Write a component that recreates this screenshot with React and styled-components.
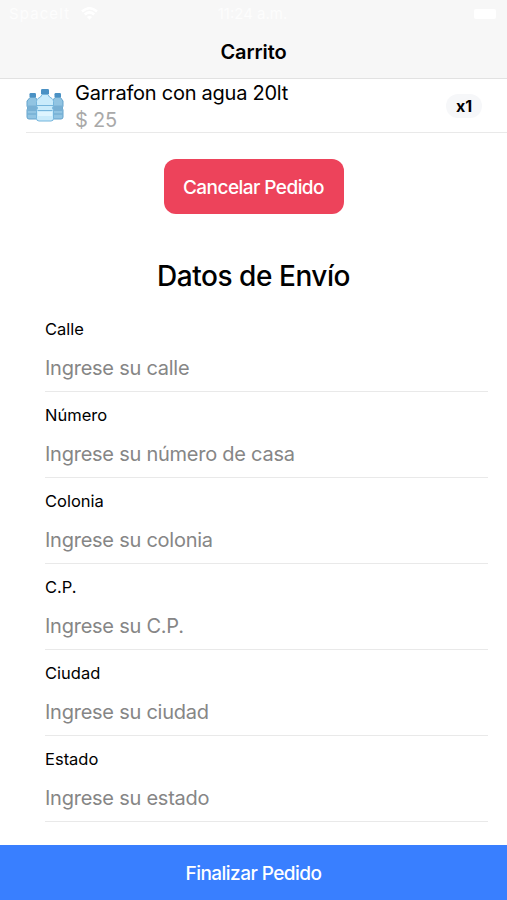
import styled, { createGlobalStyle } from "styled-components";

const GlobalStyle = createGlobalStyle`
  * {
    box-sizing: border-box;
  }
  body {
    margin: 0;
    background: #fff;
    font-family: Inter, "Liberation Sans", sans-serif;
    color: #000;
  }
`;

const Screen = styled.div`
  display: flex;
  flex-direction: column;
  height: 900px;
  overflow: hidden;
`;

const Header = styled.header`
  height: 79px;
  flex-shrink: 0;
  background: #f7f7f7;
  border-bottom: 1px solid #e2e2e2;
`;

const StatusBar = styled.div`
  display: grid;
  grid-template-columns: 1fr auto 1fr;
  align-items: center;
  height: 27px;
  padding: 0 11px 0 9px;
  font-size: 15px;
  color: #fdfdfd;
`;

const Carrier = styled.div`
  display: flex;
  align-items: center;
  gap: 11px;
  letter-spacing: 1.1px;
`;

const Battery = styled.div`
  justify-self: end;
  width: 22px;
  height: 10px;
  border-radius: 2px;
  background: #fff;
`;

const HeaderTitle = styled.h1`
  margin: 0;
  text-align: center;
  font-size: 20px;
  font-weight: 600;
  line-height: 50px;
  letter-spacing: -0.1px;
`;

const Item = styled.div`
  display: flex;
  align-items: center;
  height: 54px;
  flex-shrink: 0;
  margin-left: 26px;
  padding-right: 25px;
  border-bottom: 1px solid #e9e9e9;
`;

const ItemInfo = styled.div`
  flex: 1;
  margin-left: 11px;
  padding-top: 2px;
  font-size: 20px;
  line-height: 27px;
`;

const ItemName = styled.div`
  letter-spacing: -0.25px;
`;

const Price = styled.div`
  color: #a9a9a9;
  letter-spacing: -0.2px;
`;

const Badge = styled.span`
  width: 36px;
  height: 24px;
  border-radius: 12px;
  background: #f6f7f9;
  text-align: center;
  font-size: 16px;
  font-weight: 700;
  line-height: 25px;
`;

const CancelButton = styled.button`
  align-self: center;
  flex-shrink: 0;
  width: 180px;
  height: 55px;
  margin-top: 26px;
  padding: 2px 0 0;
  border: 0;
  border-radius: 12px;
  background: #ed435b;
  color: #fff;
  font: 450 19px Inter, sans-serif;
  letter-spacing: -0.55px;
`;

const FormTitle = styled.h2`
  margin: 43px 0 0;
  text-align: center;
  font-size: 28px;
  font-weight: 500;
  line-height: 38px;
  letter-spacing: -0.45px;
`;

const Form = styled.form`
  flex: 1;
  padding: 11px 19px 0 45px;
`;

const Field = styled.label`
  display: block;
  height: 86px;
  padding-top: 11px;
  border-bottom: 1px solid #e9e9e9;
`;

const FieldName = styled.span`
  display: block;
  font-size: 16.5px;
  line-height: 24px;
`;

const Input = styled.input`
  display: block;
  width: 100%;
  height: 38px;
  margin-top: 8px;
  padding: 0;
  border: 0;
  outline: 0;
  background: none;
  font: 400 20px Inter, sans-serif;
  letter-spacing: -0.25px;
  &::placeholder {
    color: #868686;
    opacity: 1;
  }
`;

const SubmitButton = styled.button`
  flex-shrink: 0;
  height: 55px;
  padding: 2px 0 0;
  border: 0;
  background: #397fff;
  color: #fff;
  font: 450 19px Inter, sans-serif;
  letter-spacing: -0.55px;
`;

const fields = [
  { name: "Calle", placeholder: "Ingrese su calle" },
  { name: "Número", placeholder: "Ingrese su número de casa" },
  { name: "Colonia", placeholder: "Ingrese su colonia" },
  { name: "C.P.", placeholder: "Ingrese su C.P." },
  { name: "Ciudad", placeholder: "Ingrese su ciudad" },
  { name: "Estado", placeholder: "Ingrese su estado" },
];

const Wifi = () => (
  <svg width="17" height="13" viewBox="0 0 17 13" fill="none" stroke="#fff" strokeWidth="2.6">
    <path d="M1 4.5Q8.5 -2 16 4.5" />
    <path d="M3.8 7.5Q8.5 3.4 13.2 7.5" />
    <path d="M8.5 12.8L5.9 10Q8.5 8 11.1 10Z" fill="#fff" stroke="none" />
  </svg>
);

const SideBottle = ({ x }) => (
  <g transform={`translate(${x} 0)`}>
    <rect x="4" y="4" width="6.5" height="4.5" rx="1.2" fill="#4a91c4" />
    <path
      d="M4.5 8.5H10L12.5 12V17L11.8 19L12.5 21V28Q12.5 30 10.5 30H3.5Q1.5 30 1.5 28V21L2.2 19L1.5 17V12Z"
      fill="#91c4e2"
      stroke="#64a3cc"
    />
    <path d="M2 16.5H12V22H2Z" fill="#78b0d4" />
    <path d="M2 25H12" stroke="#68a6cd" />
  </g>
);

const Bottles = () => (
  <svg width="38" height="34" viewBox="0 0 38 34">
    <SideBottle x={-0.5} />
    <SideBottle x={24.5} />
    <rect x="15" y="0" width="8" height="5.5" rx="1.3" fill="#4a91c4" />
    <path
      d="M16 5.5H22Q23 8.5 26 9.5Q27.5 10.5 27.5 12.5V17L26.5 19L27.5 21V29.5Q27.5 32 25 32H13Q10.5 32 10.5 29.5V21L11.5 19L10.5 17V12.5Q10.5 10.5 12 9.5Q15 8.5 16 5.5Z"
      fill="#c9ebfb"
      stroke="#75b5dc"
    />
    <path d="M11 16.5H27M11.5 21.5H26.5" stroke="#75b5dc" />
    <path d="M12 23H26V27H12Z" fill="#def5ff" />
  </svg>
);

const App = () => {
  return (
    <Screen>
      <GlobalStyle />
      <Header>
        <StatusBar>
          <Carrier>
            Spacelt <Wifi />
          </Carrier>
          <span>11:24 a.m.</span>
          <Battery />
        </StatusBar>
        <HeaderTitle>Carrito</HeaderTitle>
      </Header>
      <Item>
        <Bottles />
        <ItemInfo>
          <ItemName>Garrafon con agua 20lt</ItemName>
          <Price>$ 25</Price>
        </ItemInfo>
        <Badge>x1</Badge>
      </Item>
      <CancelButton>Cancelar Pedido</CancelButton>
      <FormTitle>Datos de Envío</FormTitle>
      <Form>
        {fields.map((field) => (
          <Field key={field.name}>
            <FieldName>{field.name}</FieldName>
            <Input placeholder={field.placeholder} />
          </Field>
        ))}
      </Form>
      <SubmitButton>Finalizar Pedido</SubmitButton>
    </Screen>
  );
};

export default App;
